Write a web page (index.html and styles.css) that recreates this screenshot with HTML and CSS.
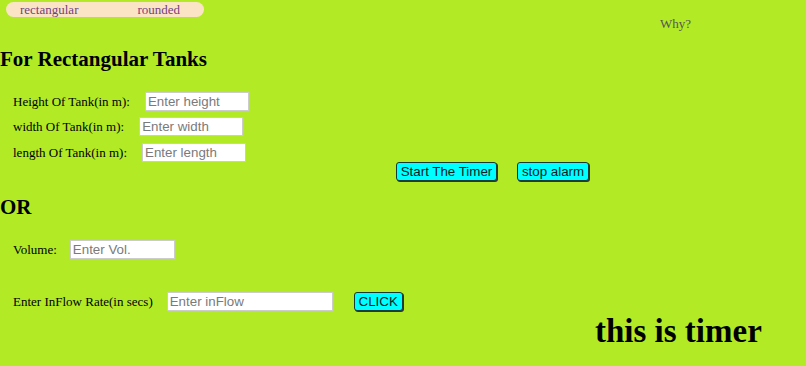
FILE: index.html
```html
<!DOCTYPE html>
<html>
<head>
<meta charset="utf-8">
<link rel="stylesheet" href="styles.css">
</head>
<body>
<div class="top">
  <div class="pill"><span class="opt opt1">rectangular</span><span class="opt opt2">rounded</span></div>
  <div class="why">Why?</div>
</div>
<h2 class="title">For Rectangular Tanks</h2>
<div class="row r1"><label class="lbl">Height Of Tank(in m):</label><input class="inp i1" placeholder="Enter height"></div>
<div class="row r2"><label class="lbl">width Of Tank(in m):</label><input class="inp i2" placeholder="Enter width"></div>
<div class="row r3"><label class="lbl">length Of Tank(in m):</label><input class="inp i3" placeholder="Enter length"></div>
<div class="btns"><button class="btn b1">Start The Timer</button><button class="btn b2">stop alarm</button></div>
<h2 class="or">OR</h2>
<div class="row r4"><label class="lbl">Volume:</label><input class="inp i4" placeholder="Enter Vol."></div>
<div class="row r5"><label class="lbl">Enter InFlow Rate(in secs)</label><input class="inp i5" placeholder="Enter inFlow"><button class="btn b3">CLICK</button></div>
<div class="timer">this is timer</div>
</body>
</html>
```
FILE: styles.css
```css
html, body { margin: 0; padding: 0; }
body {
  background: #b2eb26;
  font-family: "Liberation Serif", "Times New Roman", serif;
  width: 806px;
  height: 366px;
  overflow: hidden;
}
.top { display: flex; align-items: flex-start; height: 44px; }
.pill {
  margin: 2px 0 0 6px;
  width: 198px;
  height: 15px;
  background: #fbe4c6;
  border-radius: 8px;
  font-size: 13px;
  line-height: 15px;
  color: #743f7e;
  display: flex;
}
.opt1 { margin-left: 14px; }
.opt2 { margin-left: 59px; }
.why { margin: 16px 0 0 456px; font-size: 13px; color: #555; }
.title { margin: 0; font-size: 21px; line-height: 30px; color: #000; }
.row { display: flex; align-items: center; font-size: 13px; color: #000; }
.lbl { margin-left: 13px; }
.inp {
  font-family: "Liberation Sans", Arial, sans-serif;
  font-size: 13.33px;
  height: 19px;
  box-sizing: border-box;
  border: 1px solid #ccc;
  background: #fff;
  padding: 0 2px;
  margin: 0;
  outline: none;
}
.inp::placeholder { color: #7a7a7a; }
.r1 { margin-top: 18px; }
.i1 { width: 104px; margin-left: 15px; }
.r2 { margin-top: 6px; }
.i2 { width: 104px; margin-left: 15px; }
.r3 { margin-top: 7px; }
.i3 { width: 104px; margin-left: 15px; }
.btns { display: flex; margin: 0 0 0 396px; }
.btn {
  font-family: "Liberation Sans", Arial, sans-serif;
  font-size: 13.33px;
  height: 19px;
  padding: 0;
  white-space: nowrap;
  background: #00ffff;
  border: 1px solid #163a3a;
  border-radius: 3px;
  box-shadow: 1px 1px 0 #333;
  color: #062020;
  line-height: 16px;
}
.b1 { width: 101px; }
.b2 { width: 72px; margin-left: 20px; }
.or { margin: 13px 0 0; font-size: 21px; line-height: 26px; }
.r4 { margin-top: 20px; }
.i4 { width: 105px; margin-left: 13px; }
.r5 { margin-top: 33px; }
.i5 { width: 166px; margin-left: 14px; }
.b3 { width: 49px; margin-left: 21px; }
.timer { margin: 2px 0 0 595px; font-size: 33px; font-weight: bold; }
```
